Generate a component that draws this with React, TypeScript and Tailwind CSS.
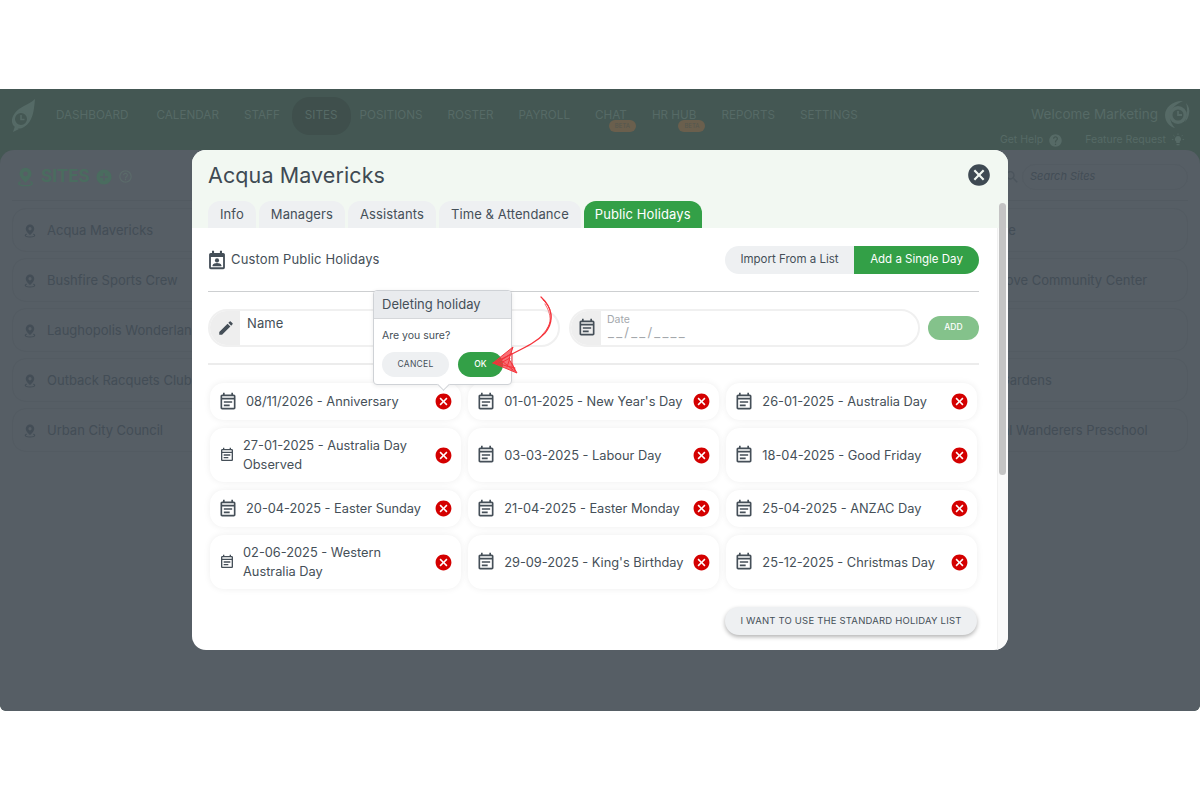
import {
  MdCancel,
  MdEdit,
  MdHelp,
  MdOutlineEventNote,
  MdAddCircle,
  MdHelpOutline,
  MdSearch,
} from 'react-icons/md';

const navItems = [
  { label: 'DASHBOARD', spacing: 'mr-[3px]' },
  { label: 'CALENDAR' },
  { label: 'STAFF' },
  { label: 'SITES', active: true },
  { label: 'POSITIONS' },
  { label: 'ROSTER' },
  { label: 'PAYROLL' },
  { label: 'CHAT', beta: true },
  { label: 'HR HUB', beta: true },
  { label: 'REPORTS' },
  { label: 'SETTINGS' },
];

const leftSites = ['Acqua Mavericks', 'Bushfire Sports Crew', 'Laughopolis Wonderland', 'Outback Racquets Club', 'Urban City Council'];
const rightSites = ['Oakside', 'Pine Cove Community Center', 'Oasis', 'Rose Gardens', 'Coastal Wanderers Preschool'];

const holidays = [
  { text: '08/11/2026 - Anniversary' },
  { text: "01-01-2025 - New Year's Day" },
  { text: '26-01-2025 - Australia Day' },
  { text: '27-01-2025 - Australia Day Observed', wrap: true },
  { text: '03-03-2025 - Labour Day' },
  { text: '18-04-2025 - Good Friday' },
  { text: '20-04-2025 - Easter Sunday' },
  { text: '21-04-2025 - Easter Monday' },
  { text: '25-04-2025 - ANZAC Day' },
  { text: '02-06-2025 - Western Australia Day', wrap: true },
  { text: "29-09-2025 - King's Birthday" },
  { text: '25-12-2025 - Christmas Day' },
];

const tabs = ['Info', 'Managers', 'Assistants', 'Time & Attendance'];

function PinIcon({ className }: { className?: string }) {
  return (
    <svg viewBox="0 0 24 28" className={className} fill="currentColor">
      <path fillRule="evenodd" d="M12 1a8.5 8.5 0 0 0-8.5 8.5C3.500 15 12 22 12 22s8.500-7 8.500-12.500A8.500 8.500 0 0 0 12 1zm0 5.200a3.300 3.300 0 1 1 0 6.600 3.300 3.300 0 0 1 0-6.600z" />
      <path d="M5 19.500C2.800 20.400 1.500 21.600 1.500 23c0 2.500 4.700 4 10.500 4s10.500-1.500 10.500-4c0-1.400-1.300-2.600-3.500-3.500l-1 1.600c1.500.6 2.400 1.300 2.400 1.900 0 1-3.400 2.200-8.400 2.200s-8.400-1.200-8.400-2.200c0-.6.900-1.300 2.400-1.900z" />
    </svg>
  );
}

function Logo() {
  return (
    <svg viewBox="0 0 26 36" className="h-[36px] w-[26px] shrink-0" fill="none">
      <path d="M25 1 C24 12 23 24 14 29 C9 32 5 30 3 27 C0 21 4 15 9 11 C15 7 21 5 25 1Z" fill="#556a66" />
      <circle cx="11" cy="21" r="7" fill="#445753" stroke="#556a66" strokeWidth="2" />
      <path d="M11 17v4.500h3.500" stroke="#556a66" strokeWidth="1.600" />
      <path d="M5 28l-2 6 6-3z" fill="#556a66" />
    </svg>
  );
}

function Avatar() {
  return (
    <svg viewBox="0 0 26 30" className="h-[30px] w-[26px]" fill="none">
      <path d="M19 2C10 1 1 8 1 16c0 7 5 12 10 13-3-3-5-7-5-12C6 10 12 5 19 2z" fill="#566a66" />
      <circle cx="14" cy="16" r="9" fill="#566a66" />
      <circle cx="14" cy="16" r="5.500" fill="#445753" />
      <path d="M14 12v4h4" stroke="#566a66" strokeWidth="1.800" />
      <path d="M22 4c3 3 4 7 3 11-.5 3-2 6-4 8 2-6 3-12 1-19z" fill="#566a66" />
    </svg>
  );
}

function Bulb() {
  return (
    <svg viewBox="0 0 16 16" className="ml-[5px] size-[14px]" fill="#566a66">
      <path d="M8 3.500a3.500 3.500 0 0 0-2 6.400V11.500h4V9.900a3.500 3.500 0 0 0-2-6.400zM6.300 12.500h3.400v1.500H6.300z" />
      <path d="M8 .5v1.800M1 7.500h1.800M13.200 7.500H15M2.800 2.500l1.200 1.200M13.200 2.500L12 3.700" stroke="#566a66" strokeWidth="1" />
    </svg>
  );
}

// calendar with a person in it, next to the section title
function ContactCalendar() {
  return (
    <svg viewBox="0 0 24 24" className="size-[20px] -ml-[1px]" fill="currentColor">
      <path fillRule="evenodd" d="M6 1h2.500v2.500h7V1H18v2.500h1.500a2 2 0 0 1 2 2V21a2 2 0 0 1-2 2h-15a2 2 0 0 1-2-2V5.500a2 2 0 0 1 2-2H6zM4.700 8.500v12.300h14.600V8.500z" />
      <circle cx="12" cy="12.500" r="2.500" />
      <path d="M6.800 19.500v-1.200c0-1.900 3.400-2.800 5.200-2.800s5.200.9 5.200 2.800v1.200z" />
    </svg>
  );
}

function NavBar() {
  return (
    <header className="h-[61px] shrink-0 bg-[#445753] flex items-start pl-[10px] pr-[10px] text-[#566a66]">
      <div className="mt-[9px] mr-[20px]"><Logo /></div>
      <nav className="flex items-center h-[53px] gap-[25px] text-[11.7px]">
        {navItems.map((item) => (
          <div key={item.label} className={`relative flex items-center ${item.spacing ?? ''} ${item.active ? 'h-[38px] -ml-[13px] -mr-[16px] px-[13px] rounded-[18px] bg-[#3f4f4c]' : ''}`}>
            {item.label}
            {item.beta && (
              <span className="absolute right-[-9px] top-[13px] h-[12px] w-[27px] rounded-full bg-[#6a5f4d] text-[6px] text-[#53574f] flex items-center justify-center">
                BETA
              </span>
            )}
          </div>
        ))}
      </nav>
      <div className="ml-auto flex flex-col items-end mt-[9px]">
        <div className="flex items-center gap-[6px] text-[13.5px] h-[32px]">
          Welcome Marketing
          <Avatar />
        </div>
        <div className="flex items-center text-[10.5px] h-[16px] mt-[2px] pr-[5px]">
          Get Help
          <MdHelp className="ml-[5px] mr-[22px]" size={15} />
          Feature Request
          <Bulb />
        </div>
      </div>
    </header>
  );
}

function SiteRow({ name }: { name: string }) {
  return (
    <div className="h-[44px] rounded-[14px] border border-[#535b62] flex items-center gap-[11px] pl-[11px] pt-[1px] text-[13px] text-[#434d56] whitespace-nowrap">
      <PinIcon className="h-[16px] w-[12px] shrink-0" />
      {name}
    </div>
  );
}

function SitesPage() {
  return (
    <main className="flex-1 bg-[#565e65] rounded-t-[14px] rounded-b-[6px] px-[12px]">
      <div className="h-[51px] pt-[3px] border-b border-[#525a61] flex items-center justify-between">
        <div className="flex items-center text-[#4a6c5f] pl-[5px]">
          <PinIcon className="h-[22px] w-[17px] mr-[7px]" />
          <span className="text-[17px] font-bold mr-[5px]">SITES</span>
          <MdAddCircle size={18} />
          <MdHelpOutline size={15} className="ml-[5px] text-[#5b6a6a]" />
        </div>
        <div className="flex items-center">
          <MdSearch size={16} className="text-[#4b545c] mr-[2px]" />
          <div className="w-[166px] h-[26px] rounded-[13px] border border-[#535b62] pl-[7px] flex items-center text-[11px] italic text-[#434d56]">
            Search Sites
          </div>
        </div>
      </div>
      <div className="flex justify-between pt-[7px]">
        <div className="w-[285px] flex flex-col gap-[6px]">
          {leftSites.map((s) => <SiteRow key={s} name={s} />)}
        </div>
        <div className="w-[257px] flex flex-col gap-[6px]">
          {rightSites.map((s) => <SiteRow key={s} name={s} />)}
        </div>
      </div>
    </main>
  );
}

function HolidayCard({ text, wrap }: { text: string; wrap?: boolean }) {
  return (
    <div className={`rounded-[14px] bg-white shadow-[0_0_7px_rgba(0,0,0,0.07)] flex items-center pr-[8px] ${wrap ? 'pl-[9px]' : 'pl-[8px]'}`}>
      <MdOutlineEventNote size={wrap ? 16 : 20} className="shrink-0 text-[#454f58]" />
      <span className={`flex-1 ml-[8px] text-[12.8px] leading-[19px] text-[#454f58] ${wrap ? 'pr-[8px]' : 'whitespace-nowrap'}`}>{text}</span>
      <MdCancel size={19} className="shrink-0 text-[#d40000]" />
    </div>
  );
}

function DeletePopover() {
  return (
    <div className="absolute left-[181px] top-[62px] w-[139px] h-[95px] rounded-[4px] border border-[#cfd2d6] bg-white shadow-[0_1px_4px_rgba(0,0,0,0.08)] text-[#454f58]">
      <div className="h-[28px] pt-[1px] bg-[#e9ebee] border-b border-[#d5d7da] rounded-t-[4px] pl-[8px] flex items-center text-[13px]">
        Deleting holiday
      </div>
      <div className="pt-[9px] pl-[8px] text-[10.500px] leading-[16px]">Are you sure?</div>
      <div className="flex gap-[9px] pl-[8px] mt-[8px]">
        <div className="w-[67px] h-[25px] rounded-full bg-[#eef0f2] flex items-center justify-center text-[8.500px] tracking-[0.3px]">CANCEL</div>
        <div className="w-[45px] h-[25px] rounded-full bg-[#33a047] text-white flex items-center justify-center text-[8.500px] font-medium">OK</div>
      </div>
      <div className="absolute left-[65px] bottom-[-5px] size-[9px] rotate-45 bg-white border-r border-b border-[#cfd2d6]" />
    </div>
  );
}

function Modal() {
  return (
    <div className="absolute left-[192px] top-[61px] w-[816px] h-[500px] rounded-[14px] bg-white overflow-hidden flex flex-col">
      <div className="h-[78px] shrink-0 bg-[#f2f8f2] px-[16px] flex flex-col">
        <div className="flex items-center justify-between h-[51px]">
          <h1 className="text-[21.5px] text-[#3f4a53] tracking-[0.1px]">Acqua Mavericks</h1>
          <MdCancel size={26} className="text-[#3f4a53] mt-[-1px]" />
        </div>
        <div className="flex items-stretch gap-[3px] h-[27px] text-[13px] tracking-[0.1px] text-[#454f58]">
          {tabs.map((t) => (
            <div key={t} className="rounded-t-[12px] bg-[#eef0f2] px-[12px] flex items-center">{t}</div>
          ))}
          <div className="rounded-t-[12px] bg-[#33a047] text-white px-[11px] flex items-center">Public Holidays</div>
        </div>
      </div>

      <div className="flex-1 pl-[16px] pr-[29px] relative text-[#454f58]">
        <div className="flex items-center justify-between h-[63px]">
          <div className="flex items-center gap-[4px] text-[13px] tracking-[0.15px]">
            <ContactCalendar />
            Custom Public Holidays
          </div>
          <div className="flex h-[28px] rounded-full overflow-hidden text-[11.5px]">
            <div className="w-[129px] bg-[#eef0f2] flex items-center justify-center">Import From a List</div>
            <div className="w-[125px] bg-[#33a047] text-white flex items-center justify-center">Add a Single Day</div>
          </div>
        </div>
        <div className="border-t border-[#cdcfd1]" />

        <div className="flex items-center h-[71px] gap-[9px]">
          <div className="w-[352px] h-[38px] rounded-full border-2 border-[#f0f0f0] overflow-hidden flex">
            <div className="w-[30px] bg-[#eeeeee] flex items-center justify-center pl-[2px]">
              <MdEdit size={18} />
            </div>
            <div className="pl-[7px] pt-[3px] text-[13px] tracking-[0.1px]">Name</div>
          </div>
          <div className="w-[351px] h-[38px] rounded-full border-2 border-[#f0f0f0] overflow-hidden flex">
            <div className="w-[30px] bg-[#eeeeee] flex items-center justify-center pl-[2px]">
              <MdOutlineEventNote size={20} />
            </div>
            <div className="pl-[6px] text-[#a4a8ac] flex flex-col">
              <span className="text-[10.5px] leading-[13px] pt-[2px]">Date</span>
              <span className="text-[13px] leading-[13px] pl-[1px] tracking-[2.2px]">__/__/____</span>
            </div>
          </div>
          <div className="ml-[-1px] w-[51px] h-[24px] rounded-full bg-[#84c28b] text-white flex items-center justify-center text-[8.5px] font-medium">ADD</div>
        </div>
        <div className="border-t-2 border-[#ececec]" />

        <div className="overflow-hidden -mx-[8px] px-[10px] mt-[11px] pt-[7px] pb-[7px]">
          <div className="grid grid-cols-3 grid-rows-[37px_54px_37px_54px] gap-x-[7.5px] gap-y-[8px]">
            {holidays.map((h) => (
              <HolidayCard key={h.text} text={h.text} wrap={h.wrap} />
            ))}
          </div>
        </div>

        <div className="flex justify-end mt-[11px] pr-[2px]">
          <div className="w-[252px] h-[28px] rounded-full bg-[#eef0f2] shadow-[0_2px_4px_rgba(0,0,0,0.3)] flex items-center justify-center text-[9.5px] tracking-[0.2px]">
            I WANT TO USE THE STANDARD HOLIDAY LIST
          </div>
        </div>

        <DeletePopover />
      </div>

      <div className="absolute right-0 top-[78px] bottom-0 w-[11px] bg-[#fafafa] border-l border-[#f0f0f0]" />
      <div className="absolute right-[2px] top-[53px] w-[7px] h-[272px] rounded-full bg-[#c4c4c4]" />
    </div>
  );
}

function SketchArrow() {
  return (
    <svg viewBox="0 0 80 90" className="absolute left-[485px] top-[204px] w-[80px] h-[90px] pointer-events-none" fill="none" stroke="#f5323a" strokeLinecap="round">
      <path d="M56 4C67 14 70 28 60 40C50 51 36 56 9 70" strokeWidth="1.200" />
      <path d="M58 7C70 17 68 31 57 42" strokeWidth="0.800" />
      <path d="M60 11C67 22 66 30 62 36" strokeWidth="0.700" />
      <path d="M8 70L28 54L24 66L32 80L8 70Z" fill="#f5323a" fillOpacity="0.7" strokeWidth="1" />
      <path d="M12 70L27 60L27 70L30 78M14 71L25 65L22 74M10 70L30 75M17 68L28 77" strokeWidth="1" />
    </svg>
  );
}

export default function App() {
  return (
    <div className="min-h-[800px] bg-white py-[89px] font-['Inter',sans-serif]">
      <div className="relative h-[622px] flex flex-col overflow-hidden bg-[#445753] rounded-b-[6px]">
        <NavBar />
        <SitesPage />
        <Modal />
        <SketchArrow />
      </div>
    </div>
  );
}
